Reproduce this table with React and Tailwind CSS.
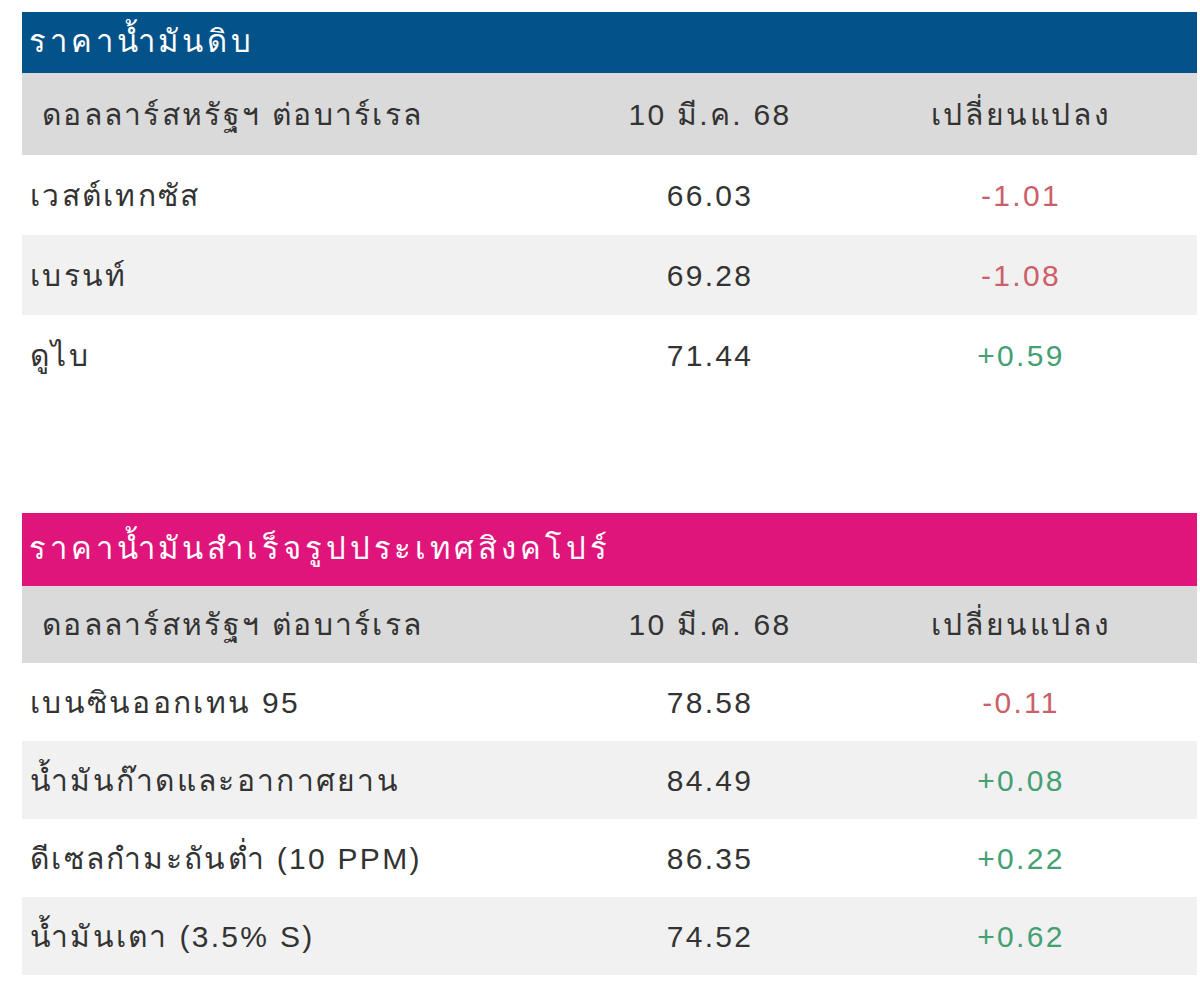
import React from "react";

const crude = [
	{ name: "เวสต์เทกซัส", price: "66.03", change: "-1.01" },
	{ name: "เบรนท์", price: "69.28", change: "-1.08" },
	{ name: "ดูไบ", price: "71.44", change: "+0.59" },
];

const refined = [
	{ name: "เบนซินออกเทน 95", price: "78.58", change: "-0.11" },
	{ name: "น้ำมันก๊าดและอากาศยาน", price: "84.49", change: "+0.08" },
	{ name: "ดีเซลกำมะถันต่ำ (10 PPM)", price: "86.35", change: "+0.22" },
	{ name: "น้ำมันเตา (3.5% S)", price: "74.52", change: "+0.62" },
];

const PriceTable = ({ title, titleClass, headerClass, rowClass, rows }) => {
	return (
		<div className="w-[1175px] flex flex-col">
			<div className={"flex items-center pl-[7px] text-white text-[31px] tracking-[3.9px] " + titleClass}>
				{title}
			</div>
			<div className={"grid grid-cols-[553px_270px_352px] items-center bg-[#dadada] text-[#333] " + headerClass}>
				<div className="pl-[20px]">ดอลลาร์สหรัฐฯ ต่อบาร์เรล</div>
				<div className="text-center">10 มี.ค. 68</div>
				<div className="text-center tracking-[2.6px]">เปลี่ยนแปลง</div>
			</div>
			{rows.map((row, i) => (
				<div
					key={row.name}
					className={
						"grid grid-cols-[553px_270px_352px] items-center text-[#333] " +
						rowClass +
						(i % 2 === 1 ? " bg-[#f1f1f1]" : " bg-white")
					}
				>
					<div className="pl-[8px]">{row.name}</div>
					<div className="text-center">{row.price}</div>
					<div
						className={
							"text-center " +
							(row.change.startsWith("-")
								? "text-[#cc5f69]"
								: "text-[#44a072]")
						}
					>
						{row.change}
					</div>
				</div>
			))}
		</div>
	);
};

const App = () => {
	return (
		<div className="w-[1200px] h-[982px] bg-white pl-[22px] pt-[12px] flex flex-col text-[30px] tracking-[2.3px] font-['Liberation_Sans','Noto_Sans',sans-serif]">
			<PriceTable
				title="ราคาน้ำมันดิบ"
				titleClass="h-[61px] bg-[#03528a]"
				headerClass="h-[82px]"
				rowClass="h-[80px]"
				rows={crude}
			/>
			<div className="h-[118px]"></div>
			<PriceTable
				title="ราคาน้ำมันสำเร็จรูปประเทศสิงคโปร์"
				titleClass="h-[73px] bg-[#e0157b]"
				headerClass="h-[77px]"
				rowClass="h-[78px]"
				rows={refined}
			/>
		</div>
	);
};

export default App;
